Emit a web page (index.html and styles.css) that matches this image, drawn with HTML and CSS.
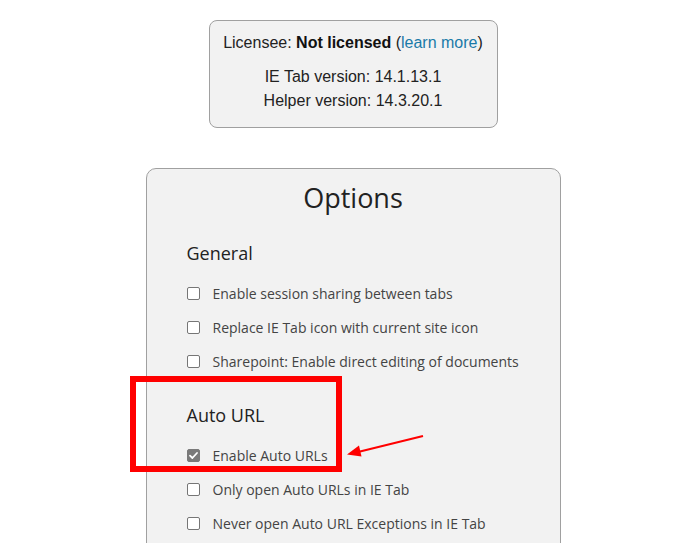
FILE: index.html
```html
<!DOCTYPE html>
<html>
<head>
<meta charset="utf-8">
<link rel="stylesheet" href="styles.css">
</head>
<body>
<div class="page">
  <div class="info">
    <div class="license">Licensee: <b>Not licensed</b> (<a class="link" href="#">learn more</a>)</div>
    <div class="ver">IE Tab version: 14.1.13.1</div>
    <div class="ver">Helper version: 14.3.20.1</div>
  </div>

  <div class="options">
    <h1 class="title">Options</h1>
    <h2 class="section">General</h2>
    <div class="row"><span class="cb"></span><span class="lbl">Enable session sharing between tabs</span></div>
    <div class="row"><span class="cb"></span><span class="lbl">Replace IE Tab icon with current site icon</span></div>
    <div class="row"><span class="cb"></span><span class="lbl">Sharepoint: Enable direct editing of documents</span></div>
    <h2 class="section section-2">Auto URL</h2>
    <div class="row"><span class="cb checked"><svg viewBox="0 0 13 13" width="13" height="13"><path d="M3 6.6 L5.4 9 L10 4" fill="none" stroke="#fff" stroke-width="1.8" stroke-linecap="round" stroke-linejoin="round"/></svg></span><span class="lbl">Enable Auto URLs</span></div>
    <div class="row"><span class="cb"></span><span class="lbl">Only open Auto URLs in IE Tab</span></div>
    <div class="row"><span class="cb"></span><span class="lbl">Never open Auto URL Exceptions in IE Tab</span></div>
  </div>
</div>
<div class="highlight"></div>
<svg class="arrow" width="90" height="30" viewBox="0 0 90 30">
  <line x1="78" y1="2" x2="13" y2="18" stroke="#f00" stroke-width="2"/>
  <path d="M2 20.5 L14 11.5 L16.5 22.5 Z" fill="#f00"/>
</svg>
</body>
</html>
```
FILE: styles.css
```css
html, body {
  margin: 0;
  padding: 0;
  background: #fff;
  overflow: hidden;
}
body {
  width: 676px;
  height: 543px;
  position: relative;
}
.page {
  display: flex;
  flex-direction: column;
  align-items: center;
  padding-top: 20px;
  padding-left: 30px;
}
.info {
  box-sizing: border-box;
  width: 289px;
  height: 108px;
  border: 1px solid #a0a0a0;
  border-radius: 8px;
  background: #f2f2f2;
  padding: 10px 0 0;
  font-family: "Liberation Sans", Arial, sans-serif;
  font-size: 16px;
  line-height: 24px;
  color: #222;
  text-align: center;
}
.license {
  margin-bottom: 10px;
}
.license b {
  font-weight: bold;
  color: #111;
}
.link {
  color: #1a7aa8;
  text-decoration: none;
}
.options {
  margin-top: 40px;
  width: 415px;
  height: 420px;
  box-sizing: border-box;
  border: 1px solid #a0a0a0;
  border-radius: 10px;
  background: #f2f2f2;
  padding: 10px 0 0 40px;
  font-family: "Open Sans", sans-serif;
}
.title {
  margin: 0 0 0 -40px;
  text-align: center;
  font-size: 27px;
  font-weight: normal;
  line-height: 38px;
  color: #222;
}
.section {
  margin: 24px 0 11px;
  font-size: 18px;
  font-weight: normal;
  line-height: 24px;
  color: #222;
}
.section-2 {
  margin-top: 25px;
}
.row {
  display: flex;
  align-items: center;
  height: 34px;
}
.cb {
  width: 13px;
  height: 13px;
  box-sizing: border-box;
  border: 1px solid #767676;
  border-radius: 2px;
  background: #fff;
  margin-right: 13px;
  display: flex;
}
.cb.checked {
  background: #7a7a7a;
  border-color: #7a7a7a;
}
.cb svg {
  margin: -1px;
}
.lbl {
  font-size: 14px;
  color: #444;
}
.highlight {
  position: absolute;
  left: 130px;
  top: 376px;
  width: 212px;
  height: 96px;
  box-sizing: border-box;
  border: 6px solid #f00;
}
.arrow {
  position: absolute;
  left: 345px;
  top: 434px;
}
```
